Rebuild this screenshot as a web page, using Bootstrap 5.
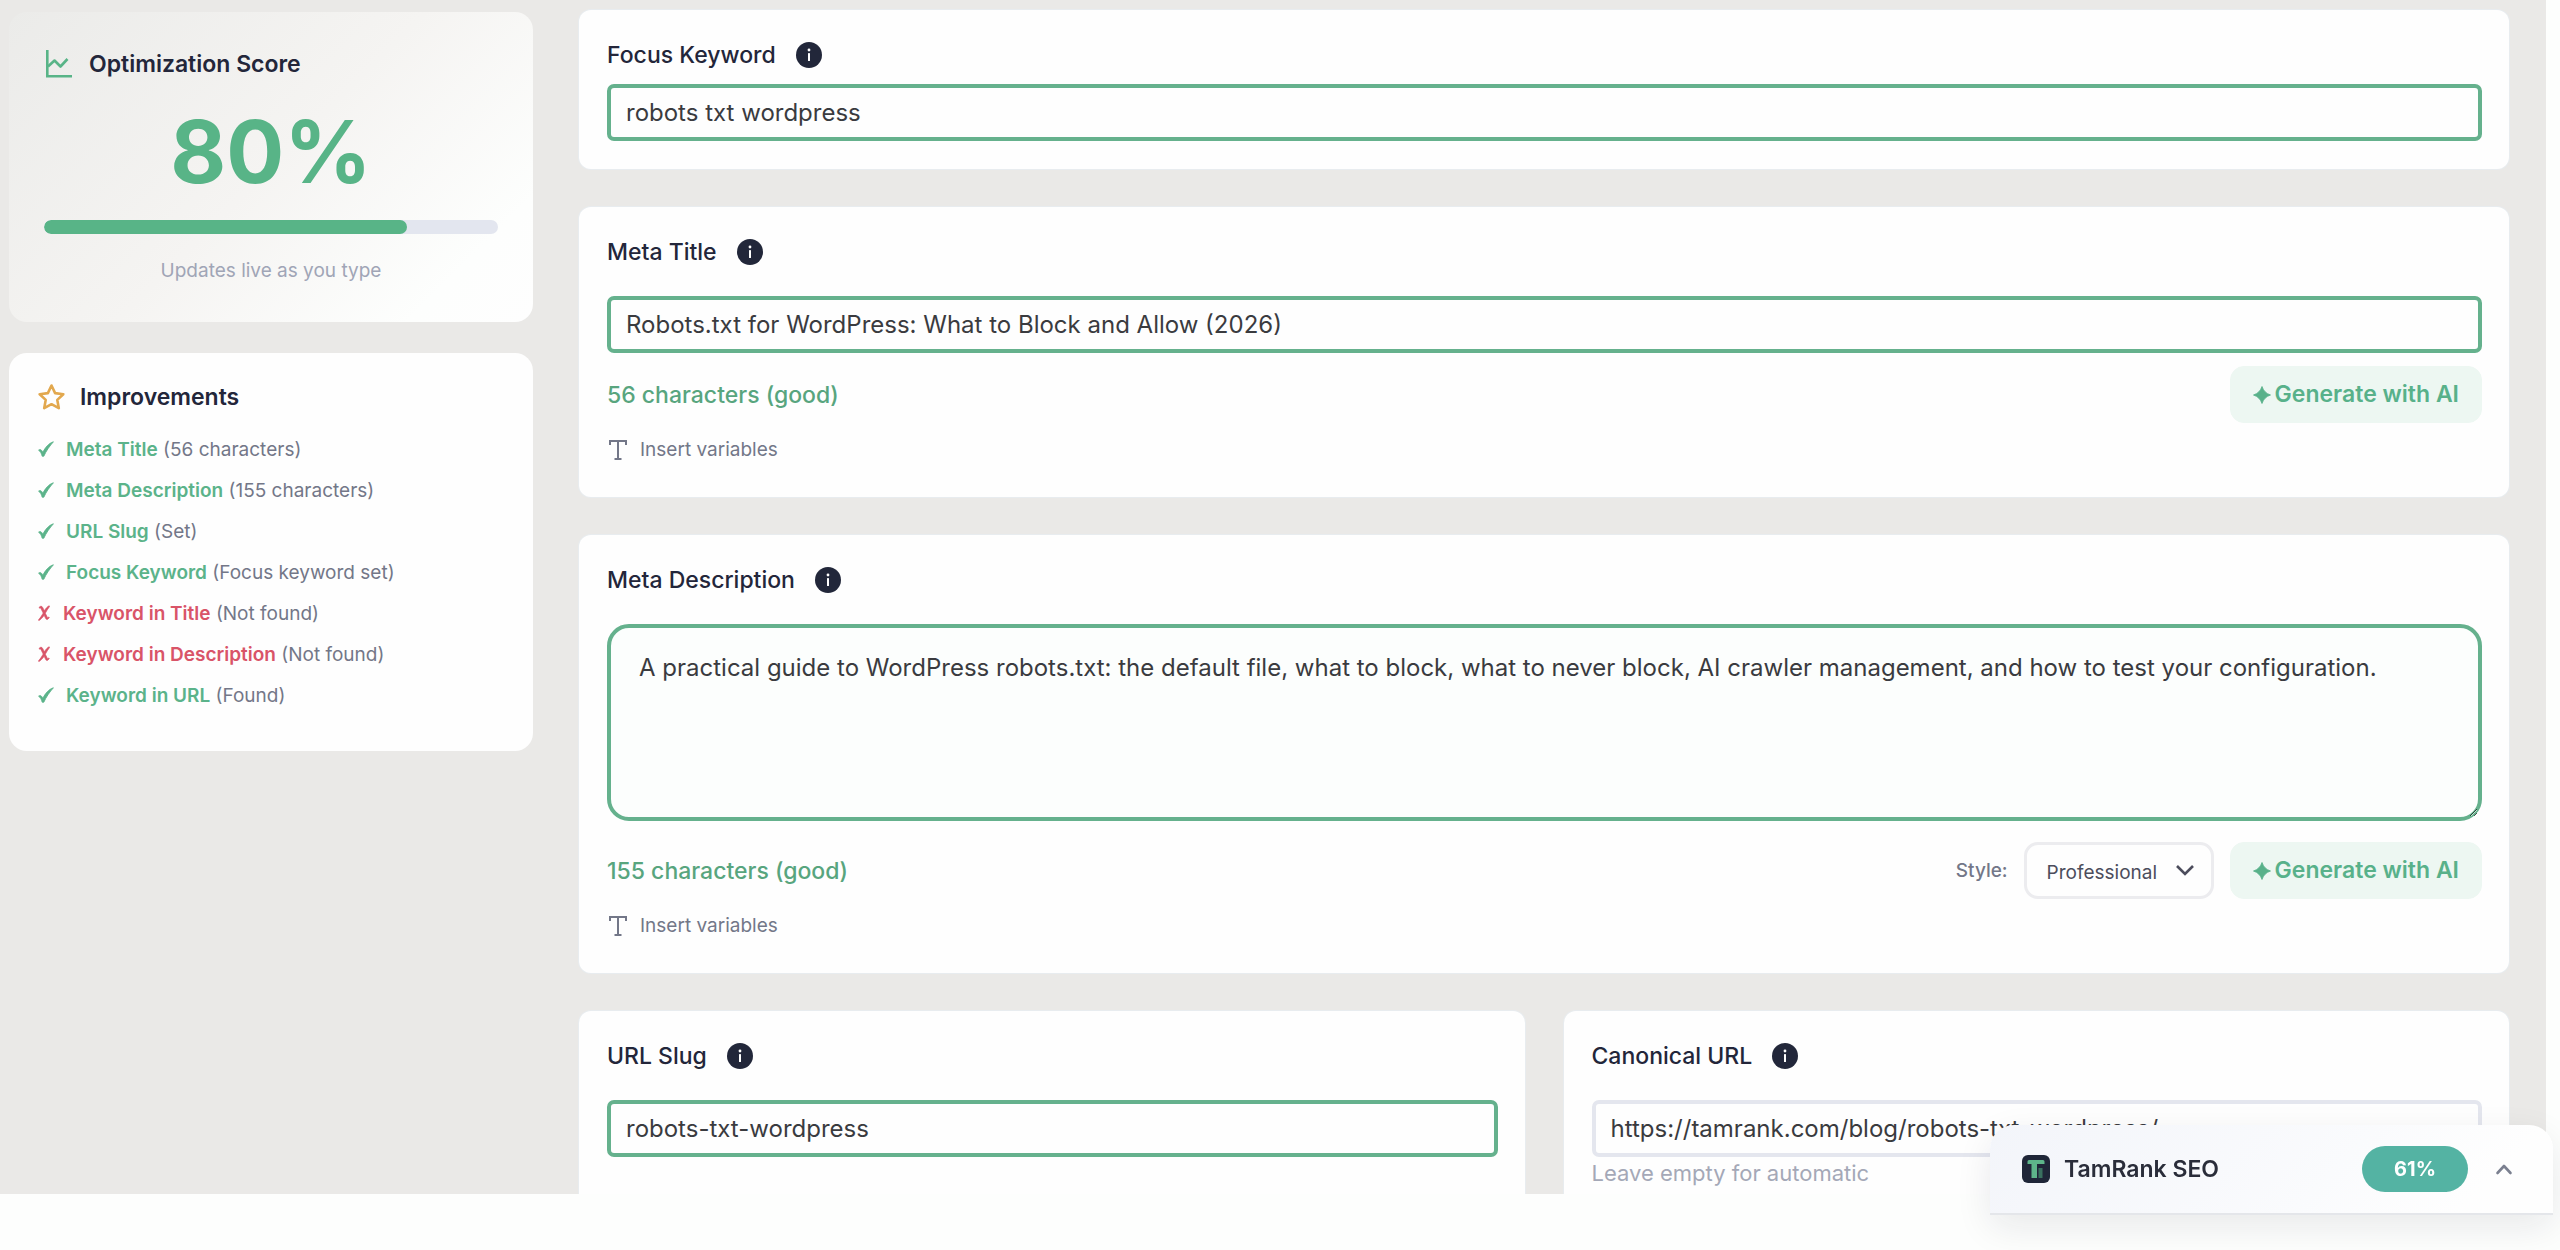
<!DOCTYPE html>
<html lang="en">
<head>
<meta charset="utf-8">
<meta name="viewport" content="width=device-width, initial-scale=1">
<title>TamRank SEO</title>
<link href="https://cdn.jsdelivr.net/npm/bootstrap@5.3.0/dist/css/bootstrap.min.css" rel="stylesheet">
<style>
  :root {
    --seo-green: #58b487;
    --seo-ink: #23263a;
    --seo-muted: #737788;
  }
  body { background: #fdfefd; color: var(--seo-ink); font-family: Inter, "Liberation Sans", sans-serif; font-size: 23px; line-height: 28px; }
  .editor-shell { background: #eae9e7; height: calc(100vh - 56px); margin-right: 14px; padding: 10px 37px 0 9px; gap: 46px; overflow: hidden; }
  .score-side { flex: 0 0 524px; gap: 31px; padding-top: 2px; }
  .field-stack { gap: 38px; min-width: 0; }

  .side-panel { border-radius: 18px; background: #fefefe; }
  .score-panel { padding: 38px 35px 37px; background: linear-gradient(135deg, #ebebe9 0%, #f5f4f2 50%, #fdfefd 85%, #fefefe 100%); }
  .side-title { font-size: 23px; line-height: 28px; font-weight: 600; gap: 15px; }
  .score-number { font-size: 86px; font-weight: 700; line-height: 90px; margin-top: 29px; color: var(--seo-green); }
  .score-track { height: 14px; border-radius: 7px; margin-top: 23px; background: #e3e6ef; }
  .score-track .progress-bar { background: var(--seo-green); border-radius: 7px; }
  .score-note { margin-top: 23px; font-size: 19px; color: #a0a5b6; }

  .todo-panel { padding: 30px 29px 35px; }
  .todo-list { margin-top: 18px; font-size: 19px; line-height: 41px; color: var(--seo-muted); }
  .todo-list li { height: 41px; }
  .todo-list b { font-weight: 600; }
  .todo-list svg { vertical-align: -1px; }
  .todo-ok svg { width: 16px; margin-right: 12px; }
  .todo-bad svg { width: 12px; margin-right: 13px; }
  .todo-ok b, .todo-ok svg { color: #5bb38a; }
  .todo-bad b, .todo-bad svg { color: #d95468; }

  .field-card { background: #fefefe; border-radius: 12px; padding: 31px 27px 33px 28px; box-shadow: 0 0 0 1px #e8ecef; }
  .focus-card { padding-bottom: 28px; }
  .field-card label { font-size: 23px; line-height: 28px; font-weight: 500; }
  .info-dot { width: 26px; height: 26px; margin-left: 20px; }
  .field-card .form-control { margin-top: 30px; height: 57px; padding: 0 15px; border: 4px solid #65b18d; border-radius: 7px; background: #fefefe; color: #3a3b3f; font-size: 24px; line-height: 32px; }
  .field-card .tight-input { margin-top: 15px; }
  .field-card .plain-input { border-color: #e4e6ee; }
  .field-card textarea.form-control { height: 197px; padding: 24px 28px; border-radius: 22px; background: #fcfefd; resize: both; }
  .title-tools { margin-top: 13px; }
  .desc-tools { margin-top: 21px; }
  .count-good { font-weight: 500; color: #58a57e; }
  .ai-btn { --bs-btn-color: #58b18a; --bs-btn-bg: #edf7f2; --bs-btn-border-color: #edf7f2; --bs-btn-hover-color: #58b18a; --bs-btn-hover-bg: #e0f2e9; --bs-btn-border-radius: 14px; height: 57px; padding: 0 22px; font-size: 23px; font-weight: 600; gap: 4px; }
  .vars-btn { --bs-btn-color: #737788; gap: 13px; padding: 0 0 0 2px; border: 0; font-size: 19px; line-height: 28px; margin-top: 13px; }
  .field-card .style-label { font-size: 19px; color: var(--seo-muted); margin-right: 16px; }
  .style-select { appearance: none; width: 190px; height: 57px; margin-right: 16px; padding: 4px 20px 0 20px; border: 3px solid #ececef; border-radius: 14px; font-size: 19px; color: #4c4d5c; background: #fefefe; }
  .style-wrap { display: grid; }
  .style-wrap > * { grid-area: 1 / 1; }
  .style-wrap svg { align-self: center; justify-self: end; margin-right: 36px; pointer-events: none; }
  .hint-text { font-size: 22px; color: #a4a8b7; margin-top: 2px; }
  .slug-row { gap: 39px; }

  .score-dock { right: 7px; bottom: 35px; width: 563px; height: 90px; padding: 0 40px 0 32px; border-radius: 24px 24px 0 0; border-bottom: 2px solid #e4e6ea; background: linear-gradient(135deg, #f3f5fa 0%, #fafbfd 60%, #fefefe 85%); box-shadow: 0 12px 36px rgba(20, 25, 40, .09); }
  .dock-name { font-weight: 600; margin-left: 14px; color: #2a2d3a; }
  .dock-pill { width: 106px; height: 46px; margin-right: 27px; font-size: 20px; font-weight: 700; background: #54b3a3; }
</style>
</head>
<body>
<svg class="d-none" aria-hidden="true">
  <symbol id="i-info" viewBox="0 0 26 26"><circle cx="13" cy="13" r="13" fill="#22273a"/><circle cx="13" cy="8" r="1.4" fill="#fff"/><rect x="12" y="11" width="2" height="8" rx=".6" fill="#fff"/></symbol>
  <symbol id="i-spark" viewBox="0 0 18 18"><path fill="currentColor" stroke="currentColor" stroke-width=".8" stroke-linejoin="round" d="M9 .5C10.600 5 13 7.400 17.500 9 13 10.600 10.600 13 9 17.500 7.400 13 5 10.600.5 9 5 7.400 7.400 5 9 .5Z"/></symbol>
  <symbol id="i-type" viewBox="0 0 18 20"><path fill="none" stroke="currentColor" stroke-width="2" d="M1 5V1h16v4M9 1v18M5.500 19h7"/></symbol>
  <symbol id="i-check" viewBox="0 0 16 16"><path fill="currentColor" stroke="currentColor" stroke-width=".9" stroke-linejoin="round" d="M.6 9.200C2 8 3.500 8.500 4.800 11.300 7.200 6.700 10.800 2.200 15.400.8 12 4.600 8 10 5.800 15.200L4.200 15.200C3.500 12.500 2.400 10.200.6 9.200Z"/></symbol>
  <symbol id="i-cross" viewBox="0 0 12 16"><path fill="currentColor" stroke="currentColor" stroke-width=".7" stroke-linejoin="round" d="M1.200 2.200C2.500.8 4 1 4.800 2.700L6.300 5.800C7.700 3.600 9.300 1.600 11.200.8L11.600 1.400C10.200 3.300 8.500 5.700 7.300 8.200L9.500 12.700 10.800 12 11.300 12.800 9.300 14.500C8.300 14.600 7.900 14 7.500 13.100L6.200 10.300C4.500 12.500 2.500 14.700.8 15.600L.4 15.100C2 13.200 3.800 10.800 5.200 8.100L3.200 4C2.800 3 2.300 2.600 1.400 3.200Z"/></symbol>
</svg>

<main class="editor-shell d-flex align-items-start">
  <aside class="score-side d-flex flex-column">
    <section class="side-panel score-panel">
      <h2 class="side-title d-flex align-items-center mb-0">
        <svg width="30" height="28" viewBox="-2 0 30 28" fill="none" stroke="#58b487" stroke-width="2.600" aria-hidden="true"><path d="M1.300 0v26.300H26"/><path d="M2 16.500l6.500-6 6 6 7-7.500" stroke-linejoin="round"/></svg>
        Optimization Score
      </h2>
      <div class="score-number text-center">80%</div>
      <div class="progress score-track" role="progressbar" aria-label="Optimization score" aria-valuenow="80" aria-valuemin="0" aria-valuemax="100">
        <div class="progress-bar" style="width: 80%"></div>
      </div>
      <div class="score-note text-center">Updates live as you type</div>
    </section>

    <section class="side-panel todo-panel">
      <h2 class="side-title d-flex align-items-center mb-0">
        <svg width="27" height="26" viewBox="0 0 27 26" fill="none" stroke="#e2a84e" stroke-width="2.600" stroke-linejoin="round" aria-hidden="true"><path d="M13.500 1.500l3.600 7.600 8.200 1.100-6 5.700 1.500 8.300-7.300-4-7.300 4 1.500-8.300-6-5.700 8.200-1.100z"/></svg>
        Improvements
      </h2>
      <ul class="todo-list list-unstyled mb-0">
        <li class="todo-ok"><svg height="16"><use href="#i-check"/></svg><b>Meta Title</b> (56 characters)</li>
        <li class="todo-ok"><svg height="16"><use href="#i-check"/></svg><b>Meta Description</b> (155 characters)</li>
        <li class="todo-ok"><svg height="16"><use href="#i-check"/></svg><b>URL Slug</b> (Set)</li>
        <li class="todo-ok"><svg height="16"><use href="#i-check"/></svg><b>Focus Keyword</b> (Focus keyword set)</li>
        <li class="todo-bad"><svg height="16"><use href="#i-cross"/></svg><b>Keyword in Title</b> (Not found)</li>
        <li class="todo-bad"><svg height="16"><use href="#i-cross"/></svg><b>Keyword in Description</b> (Not found)</li>
        <li class="todo-ok"><svg height="16"><use href="#i-check"/></svg><b>Keyword in URL</b> (Found)</li>
      </ul>
    </section>
  </aside>

  <div class="field-stack flex-grow-1 d-flex flex-column">
    <section class="field-card focus-card">
      <div class="d-flex align-items-center"><label for="focus">Focus Keyword</label><svg class="info-dot" aria-hidden="true"><use href="#i-info"/></svg></div>
      <input id="focus" type="text" class="form-control tight-input" value="robots txt wordpress">
    </section>

    <section class="field-card">
      <div class="d-flex align-items-center"><label for="title">Meta Title</label><svg class="info-dot" aria-hidden="true"><use href="#i-info"/></svg></div>
      <input id="title" type="text" class="form-control" value="Robots.txt for WordPress: What to Block and Allow (2026)">
      <div class="title-tools d-flex align-items-center justify-content-between">
        <span class="count-good">56 characters (good)</span>
        <button type="button" class="btn ai-btn d-flex align-items-center"><svg width="18" height="18" aria-hidden="true"><use href="#i-spark"/></svg>Generate with AI</button>
      </div>
      <button type="button" class="btn vars-btn d-flex align-items-center"><svg width="18" height="20" aria-hidden="true"><use href="#i-type"/></svg>Insert variables</button>
    </section>

    <section class="field-card">
      <div class="d-flex align-items-center"><label for="desc">Meta Description</label><svg class="info-dot" aria-hidden="true"><use href="#i-info"/></svg></div>
      <textarea id="desc" class="form-control">A practical guide to WordPress robots.txt: the default file, what to block, what to never block, AI crawler management, and how to test your configuration.</textarea>
      <div class="desc-tools d-flex align-items-center">
        <span class="count-good me-auto">155 characters (good)</span>
        <label for="style" class="style-label">Style:</label>
        <div class="style-wrap">
          <select id="style" class="style-select"><option>Professional</option><option>Casual</option></select>
          <svg width="18" height="11" viewBox="0 0 18 11" fill="none" stroke="#4c4d5c" stroke-width="2.600" aria-hidden="true"><path d="M1 1l8 8 8-8"/></svg>
        </div>
        <button type="button" class="btn ai-btn d-flex align-items-center"><svg width="18" height="18" aria-hidden="true"><use href="#i-spark"/></svg>Generate with AI</button>
      </div>
      <button type="button" class="btn vars-btn d-flex align-items-center"><svg width="18" height="20" aria-hidden="true"><use href="#i-type"/></svg>Insert variables</button>
    </section>

    <div class="slug-row d-flex">
      <section class="field-card flex-fill w-50">
        <div class="d-flex align-items-center"><label for="slug">URL Slug</label><svg class="info-dot" aria-hidden="true"><use href="#i-info"/></svg></div>
        <input id="slug" type="text" class="form-control" value="robots-txt-wordpress">
      </section>
      <section class="field-card flex-fill w-50">
        <div class="d-flex align-items-center"><label for="canon">Canonical URL</label><svg class="info-dot" aria-hidden="true"><use href="#i-info"/></svg></div>
        <input id="canon" type="text" class="form-control plain-input" value="https://tamrank.com/blog/robots-txt-wordpress/">
        <div class="hint-text">Leave empty for automatic</div>
      </section>
    </div>
  </div>
</main>

<div class="score-dock position-fixed d-flex align-items-center">
  <svg width="28" height="28" viewBox="0 0 28 28" aria-hidden="true"><rect width="28" height="28" rx="6" fill="#1f2638"/><path fill="#5db58a" d="M7 5h14a1.500 1.500 0 0 1 1.500 1.500V9H15v14h-5.500V9H5.500V6.500A1.500 1.500 0 0 1 7 5z"/><rect x="16.500" y="13" width="4" height="10" fill="#39705f"/></svg>
  <span class="dock-name me-auto">TamRank SEO</span>
  <span class="dock-pill badge rounded-pill d-flex align-items-center justify-content-center">61%</span>
  <button type="button" class="btn border-0 p-0 d-flex" aria-label="Expand"><svg width="18" height="12" viewBox="0 0 18 12" fill="none" stroke="#7b8090" stroke-width="2.600" stroke-linecap="round" stroke-linejoin="round"><path d="M2.500 10L9 3l6.500 7"/></svg></button>
</div>
<script src="https://cdn.jsdelivr.net/npm/bootstrap@5.3.0/dist/js/bootstrap.bundle.min.js"></script>
</body>
</html>
